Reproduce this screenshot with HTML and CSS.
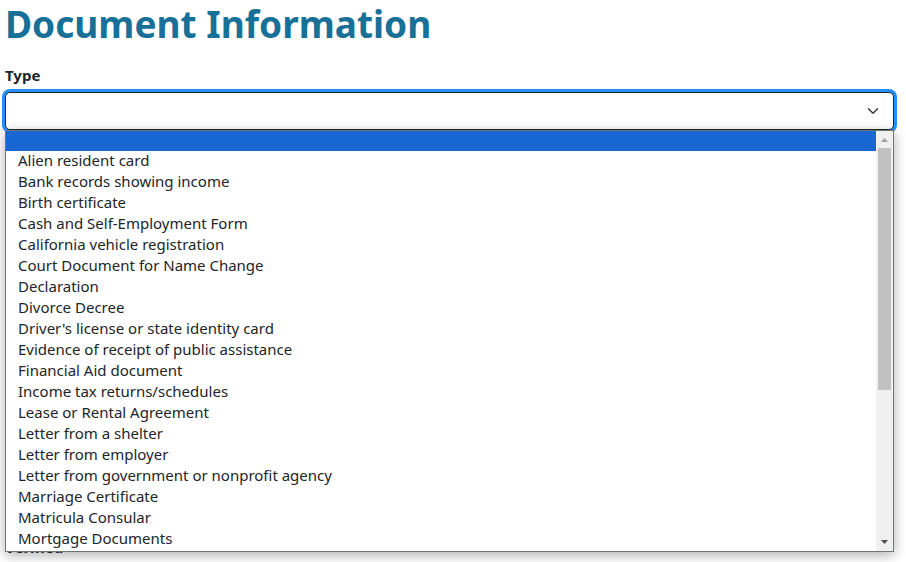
FILE: index.html
```html
<!DOCTYPE html>
<html lang="en">
<head>
<meta charset="utf-8">
<title>Document Information</title>
<link rel="stylesheet" href="styles.css">
</head>
<body>
<main class="page">
  <h1 class="title">Document Information</h1>
  <div class="field">
    <label class="label" for="type">Type</label>
    <div class="control">
      <select class="select" id="type"><option></option></select>
      <svg class="chevron" viewBox="0 0 16 16" aria-hidden="true"><path d="m2 5 6 6 6-6"/></svg>
      <div class="popup">
        <ul class="options" role="listbox" aria-label="Type">
          <li class="option selected" role="option" aria-selected="true"></li>
          <li class="option" role="option">Alien resident card</li>
          <li class="option" role="option">Bank records showing income</li>
          <li class="option" role="option">Birth certificate</li>
          <li class="option" role="option">Cash and Self-Employment Form</li>
          <li class="option" role="option">California vehicle registration</li>
          <li class="option" role="option">Court Document for Name Change</li>
          <li class="option" role="option">Declaration</li>
          <li class="option" role="option">Divorce Decree</li>
          <li class="option" role="option">Driver's license or state identity card</li>
          <li class="option" role="option">Evidence of receipt of public assistance</li>
          <li class="option" role="option">Financial Aid document</li>
          <li class="option" role="option">Income tax returns/schedules</li>
          <li class="option" role="option">Lease or Rental Agreement</li>
          <li class="option" role="option">Letter from a shelter</li>
          <li class="option" role="option">Letter from employer</li>
          <li class="option" role="option">Letter from government or nonprofit agency</li>
          <li class="option" role="option">Marriage Certificate</li>
          <li class="option" role="option">Matricula Consular</li>
          <li class="option" role="option">Mortgage Documents</li>
        </ul>
        <div class="scrollbar" aria-hidden="true">
          <svg class="arrow up" viewBox="0 0 17 17"><path d="M5 11h7L8.500 7z"/></svg>
          <div class="track"><div class="thumb"></div></div>
          <svg class="arrow" viewBox="0 0 17 17"><path d="M5 6h7L8.500 10z"/></svg>
        </div>
      </div>
    </div>
  </div>
  <div class="label verified">Verified</div>
</main>
</body>
</html>
```
FILE: styles.css
```css
* { box-sizing: border-box; }

body {
  margin: 0;
  background: #fff;
  color: #212529;
  font: 15px/21px "Noto Sans", sans-serif;
}

.page {
  min-height: 100vh;
  padding: 0 12px 0 5px;
}

.title {
  margin: 0 0 17px;
  color: #197096;
  font-size: 37px;
  font-weight: 700;
  line-height: 48px;
}

.label {
  display: block;
  font-weight: 700;
  line-height: 21px;
}

.field .label { margin-bottom: 6px; }

.control { position: relative; }

.select {
  display: block;
  width: 100%;
  height: 38px;
  padding: 0 36px 0 12px;
  appearance: none;
  border: 1px solid #212529;
  border-radius: 5px;
  background: #fff;
  font: inherit;
  outline: none;
  box-shadow: 0 0 0 3px #258fff;
}

.chevron {
  position: absolute;
  top: 13px;
  right: 15px;
  width: 12px;
  height: 12px;
  fill: none;
  stroke: #343a40;
  stroke-width: 2;
  stroke-linecap: round;
  stroke-linejoin: round;
}

.popup {
  position: absolute;
  top: 100%;
  left: 0;
  right: 0;
  display: flex;
  border: 1px solid #6f7573;
  background: #fff;
  box-shadow: 0 3px 12px rgba(0, 0, 0, 0.32);
}

.options {
  flex: 1;
  margin: 0;
  padding: 0 0 1px;
  list-style: none;
}

.option {
  height: 21px;
  padding-left: 12px;
  line-height: 19px;
}

.selected {
  height: 20px;
  background: #1967d2;
}

.scrollbar {
  display: flex;
  flex-direction: column;
  width: 17px;
  background: #f0f0f0;
}

.arrow {
  width: 17px;
  height: 17px;
  fill: #4d4d4d;
}

.up { fill: #a0a0a0; }

.track {
  flex: 1;
  padding: 0 2px;
}

.thumb {
  height: 242px;
  background: #c1c1c1;
}

.verified { margin-top: 407px; }
```
